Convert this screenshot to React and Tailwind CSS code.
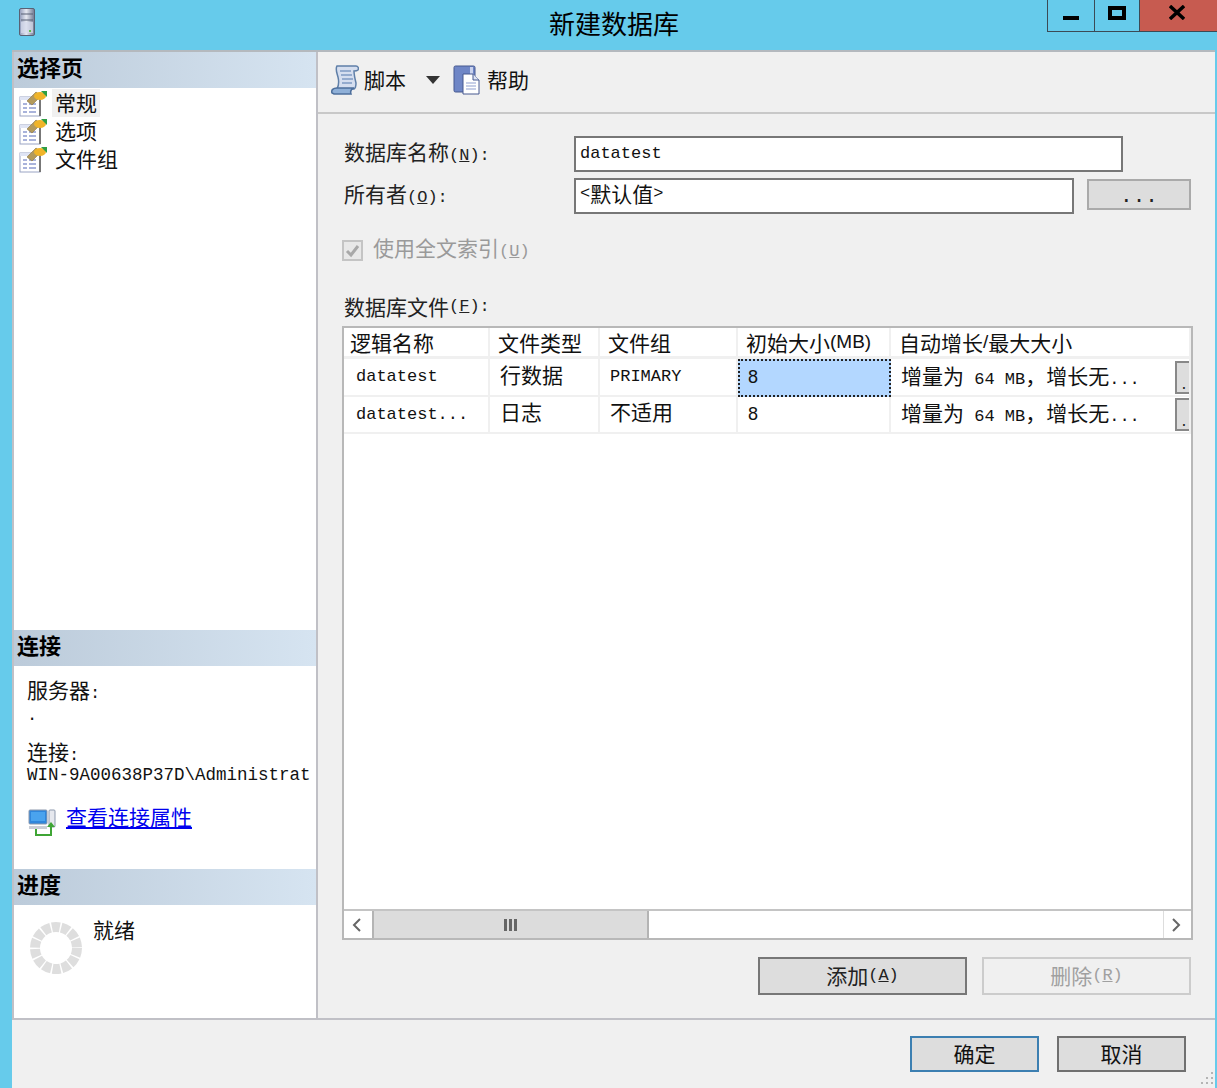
const cjk = "font-['Noto_Sans_CJK_SC','Noto_Sans_CJK_JP',sans-serif]";
const mono = "font-['Liberation_Mono','Noto_Sans_CJK_SC',monospace]";

function Mnemonic({ before, letter, after = ')' }) {
  return (
    <>
      {before}
      <span className={`${mono} text-[17px]`}>
        (<span className="underline">{letter}</span>{after}
      </span>
    </>
  );
}

function PageIcon() {
  return (
    <svg width="28" height="27" viewBox="0 0 28 27" className="shrink-0">
      <rect x="1" y="7" width="20" height="19" fill="#fff" stroke="#9aa4c4" />
      <rect x="1" y="7" width="20" height="3" fill="#dfe4f4" />
      <path d="M4 14h4M10 14h7M4 18h4M10 18h7M4 22h4M10 22h7" stroke="#8d9bd0" strokeWidth="1.5" />
      <path d="M21 8v18" stroke="#777" strokeWidth="2" />
      <path d="M8 11 17 2l5 4-9 9z" fill="#b39a5c" stroke="#8a7440" strokeWidth="0.6" />
      <ellipse cx="21" cy="6" rx="6" ry="4" fill="#f0b429" />
      <path d="M22 1h6v6z" fill="#2f9e44" />
    </svg>
  );
}

function ServerIcon() {
  return (
    <svg width="16" height="28" viewBox="0 0 16 28">
      <defs>
        <linearGradient id="srv" x1="0" x2="1" y1="0" y2="0">
          <stop offset="0" stopColor="#8f99b8" />
          <stop offset="0.45" stopColor="#e6e9f2" />
          <stop offset="1" stopColor="#6d7690" />
        </linearGradient>
      </defs>
      <rect x="0.5" y="0.5" width="15" height="27" rx="1.5" fill="url(#srv)" stroke="#596174" />
      <path d="M2 6h12M2 12h12" stroke="#596174" />
      <rect x="2" y="14" width="12" height="11" fill="#d7dced" opacity="0.7" />
      <rect x="10" y="22" width="2" height="2" fill="#5fc04a" />
    </svg>
  );
}

function ScrollIcon() {
  return (
    <svg width="28" height="30" viewBox="0 0 28 30" className="shrink-0">
      <path d="M6 1h19c2 0 3 2 2 4-1 1-3 1-4 1 0 4 1 8 2 12 0 3 0 5-2 6H6c2-4 2-8 1-12C6 8 4 4 6 1z" fill="#d5deef" stroke="#5f7fa8" strokeWidth="1.5" />
      <path d="M9 6h11M10 10h11M11 14h11M11 18h10" stroke="#7f9bc4" strokeWidth="1.5" />
      <path d="M1 28c-1-3 1-5 5-5h17c-3 1-4 3-3 6H3z" fill="#8fb0d8" stroke="#4d6f9c" strokeWidth="1.5" />
    </svg>
  );
}

function HelpIcon() {
  return (
    <svg width="28" height="30" viewBox="0 0 28 30" className="shrink-0">
      <rect x="1" y="1" width="21" height="26" rx="1.5" fill="#6f86c6" stroke="#46588f" />
      <rect x="17" y="2" width="3" height="12" fill="#c9d2ee" />
      <path d="M10 9h10l6 6v14H10z" fill="#fff" stroke="#46588f" />
      <path d="M20 9v6h6" fill="#dfe5f5" stroke="#46588f" />
      <path d="M13 18h10M13 21h10M13 24h10" stroke="#8fa0cf" strokeWidth="1.2" />
    </svg>
  );
}

function ConnectionIcon() {
  return (
    <svg width="28" height="28" viewBox="0 0 28 28" className="shrink-0">
      <rect x="1" y="1" width="18" height="14" rx="1" fill="#2f86dc" stroke="#8d99ad" />
      <rect x="3" y="3" width="14" height="9" fill="#4aa3ee" />
      <rect x="1" y="17" width="18" height="3" fill="#c9cdd6" />
      <rect x="21" y="1" width="6" height="17" rx="1" fill="#e6e8ee" stroke="#8d99ad" />
      <path d="M8 20v6h15v-9" fill="none" stroke="#3fa535" strokeWidth="2" />
      <path d="m19 18 4-5 4 5z" fill="#3fa535" />
    </svg>
  );
}

function Spinner() {
  return (
    <svg width="52" height="52" viewBox="0 0 52 52" className="shrink-0">
      <circle cx="26" cy="26" r="21" fill="none" stroke="#dedede" strokeWidth="10" strokeDasharray="8 1.42" />
    </svg>
  );
}

function SectionHeader({ children }) {
  return (
    <div className="flex h-9 items-center bg-linear-to-r from-[#bccbda] to-[#d6e4f1] pb-[8px] pl-[3px] text-[22px] font-bold text-black">
      {children}
    </div>
  );
}

function NavItem({ label, selected }) {
  return (
    <div className="flex h-[28px] items-center pl-[5px]">
      <PageIcon />
      <span className={`ml-[5px] flex h-[28px] items-center px-[3px] text-[21px] text-[#111] ${selected ? 'bg-[#f0f0f0]' : ''}`}>
        {label}
      </span>
    </div>
  );
}

function GrayButton({ className = '', children }) {
  return (
    <button type="button" className={`flex items-center justify-center bg-[#dddddd] text-[21px] ${className}`}>
      {children}
    </button>
  );
}

const CELL = 'flex items-center border-r-[2px] border-b-[2px] border-[#f0f0f0] whitespace-nowrap';
const COLS = 'grid grid-cols-[146px_110px_138px_153px_1fr]';

function GrowthCell({ textClass = '' }) {
  return (
    <div className={`${CELL} justify-between border-r-0 pl-[10px]`}>
      <span className={textClass}>
        增量为<span className={`${mono} text-[17px]`}> 64 MB</span>，增长无<span className={`${mono} text-[17px]`}>...</span>
      </span>
      <div className="flex h-[33px] w-[14px] shrink-0 items-end justify-end border-2 border-r-0 border-[#888] bg-[#dddddd] pr-[3px] text-[14px] leading-[18px]">.</div>
    </div>
  );
}

function FilesTable() {
  return (
    <div className="ml-[-2px] mt-[7px] flex h-[614px] w-[851px] flex-col border-2 border-[#b8b8b8] bg-white text-[21px] leading-[24px] text-[#111]">
      <div className={`${COLS} h-[31px]`}>
        <div className={`${CELL} border-b-[3px] pl-[6px]`}>逻辑名称</div>
        <div className={`${CELL} border-b-[3px] pl-[8px]`}>文件类型</div>
        <div className={`${CELL} border-b-[3px] pl-[8px]`}>文件组</div>
        <div className={`${CELL} border-b-[3px] pl-[8px]`}>
          初始大小<span className="font-['Liberation_Sans',sans-serif] text-[19px]">(MB)</span>
        </div>
        <div className={`${CELL} border-b-[3px] border-r-0 pl-[8px]`}>
          自动增长<span className="font-['Liberation_Sans',sans-serif] text-[19px]">/</span>最大大小
        </div>
      </div>
      <div className={`${COLS} h-[38px]`}>
        <div className={`${CELL} ${mono} pl-[12px] text-[17px]`}>datatest</div>
        <div className={`${CELL} pb-[6px] pl-[10px]`}>行数据</div>
        <div className={`${CELL} ${mono} pl-[10px] text-[17px]`}>PRIMARY</div>
        <div className="flex items-center border-2 border-dotted border-[#222] bg-[#b3d7ff] pb-[2px] pl-[8px] font-['Liberation_Sans',sans-serif] text-[18px]">8</div>
        <GrowthCell />
      </div>
      <div className={`${COLS} h-[37px]`}>
        <div className={`${CELL} ${mono} pl-[12px] text-[17px]`}>datatest...</div>
        <div className={`${CELL} pb-[8px] pl-[10px]`}>日志</div>
        <div className={`${CELL} pb-[8px] pl-[10px]`}>不适用</div>
        <div className={`${CELL} pb-[2px] pl-[10px] font-['Liberation_Sans',sans-serif] text-[18px]`}>8</div>
        <GrowthCell />
      </div>
      <div className="flex-1" />
      <div className="flex h-[29px] border-t-2 border-[#c4c4c4]">
        <div className="flex w-[28px] items-center justify-center pr-[2px]">
          <svg width="12" height="16" viewBox="0 0 12 16"><path d="M9 2 3 8l6 6" fill="none" stroke="#666" strokeWidth="2" /></svg>
        </div>
        <div className="flex w-[277px] items-center justify-center border-x-2 border-[#b4b4b4] bg-[#dcdcdc]">
          <svg width="14" height="12" viewBox="0 0 14 12"><path d="M0 0h3v12H0zM5 0h3v12H5zM10 0h3v12h-3z" fill="#666" /></svg>
        </div>
        <div className="flex-1" />
        <div className="flex w-[28px] items-center justify-center border-l border-[#dddddd] pr-[4px]">
          <svg width="12" height="16" viewBox="0 0 12 16"><path d="m3 2 6 6-6 6" fill="none" stroke="#666" strokeWidth="2" /></svg>
        </div>
      </div>
    </div>
  );
}

function WindowControls() {
  return (
    <div className="absolute right-0 top-0 flex h-[32px] border-b border-[#3b4a55]">
      <div className="flex w-[48px] items-end justify-center border-x border-[#3b4a55] pb-[11px]">
        <div className="h-[4px] w-[16px] bg-black" />
      </div>
      <div className="flex w-[44px] items-start justify-center pt-[6px]">
        <div className="h-[14px] w-[18px] border-[4px] border-black" />
      </div>
      <div className="flex w-[78px] items-start justify-center border-l border-[#3b4a55] bg-[#c75b50] pr-[3px] pt-[5px]">
        <svg width="16" height="15" viewBox="0 0 16 15"><path d="m1 1 14 13M15 1 1 14" stroke="#000" strokeWidth="3.4" /></svg>
      </div>
    </div>
  );
}

export default function App() {
  return (
    <div className={`${cjk} flex h-[1088px] w-[1217px] flex-col overflow-hidden bg-[#66cbeb] text-black`}>
      <div className="relative flex h-[50px] shrink-0 items-center justify-center pb-[6px] pl-[11px]">
        <div className="absolute left-[19px] top-[8px]"><ServerIcon /></div>
        <span className="text-[26px]">新建数据库</span>
        <WindowControls />
      </div>

      <div className="ml-[12px] mr-[2px] flex flex-1 flex-col border-t-2 border-[#b4b9be] bg-[#f0f0f0]">
        <div className="flex h-[968px] shrink-0 border-b-2 border-[#c0c0c6]">
          <aside className="flex w-[306px] shrink-0 flex-col border-x-2 border-[#c0c0c6] bg-white">
            <div className="h-[578px] shrink-0">
              <SectionHeader>选择页</SectionHeader>
              <div className="pt-[1px]">
                <NavItem label="常规" selected />
                <NavItem label="选项" />
                <NavItem label="文件组" />
              </div>
            </div>
            <div className="h-[239px] shrink-0">
              <SectionHeader>连接</SectionHeader>
              <div className="pl-[13px] pt-[8px] text-[21px] text-[#111]">
                <div className="h-[30px] leading-[30px]">服务器<span className={`${mono} text-[17px]`}>:</span></div>
                <div className={`${mono} h-[37px] text-[17px] leading-[24px]`}>.</div>
                <div className="mb-[3px] h-[21px] leading-[21px]">连接<span className={`${mono} text-[17px]`}>:</span></div>
                <div className={`${mono} h-[21px] whitespace-nowrap text-[17.5px] leading-[21px]`}>WIN-9A00638P37D\Administrat</div>
                <div className="mt-[15px] flex items-center pl-[1px]">
                  <ConnectionIcon />
                  <a className="ml-[10px] pb-[12px] text-[#0000ee] underline">查看连接属性</a>
                </div>
              </div>
            </div>
            <div className="flex-1">
              <SectionHeader>进度</SectionHeader>
              <div className="flex pl-[16px] pt-[17px]">
                <Spinner />
                <span className="ml-[11px] mt-[-8px] text-[21px] text-[#111]">就绪</span>
              </div>
            </div>
          </aside>

          <main className="flex flex-1 flex-col">
            <div className="flex h-[62px] shrink-0 items-center border-b-2 border-[#c8c8c8] pb-[5px] pl-[13px] text-[21px] text-[#111]">
              <ScrollIcon />
              <span className="ml-[5px]">脚本</span>
              <svg width="14" height="8" viewBox="0 0 14 8" className="ml-[20px]"><path d="M0 0h14L7 8z" fill="#333" /></svg>
              <span className="ml-[13px]"><HelpIcon /></span>
              <span className="ml-[6px]">帮助</span>
            </div>

            <div className="flex flex-1 flex-col pl-[26px] text-[21px] text-[#222]">
              <div className="mt-[22px] flex h-[36px] items-center">
                <span className="w-[230px] pb-[4px]"><Mnemonic before="数据库名称" letter="N" after="):" /></span>
                <div className={`${mono} flex h-full w-[549px] items-center border-2 border-[#777] bg-white pl-[4px] text-[17px] text-[#111]`}>datatest</div>
              </div>
              <div className="mt-[6px] flex h-[36px] items-center">
                <span className="w-[230px] pb-[4px]"><Mnemonic before="所有者" letter="O" after="):" /></span>
                <div className="flex h-full w-[500px] items-center border-2 border-[#777] bg-white pb-[4px] pl-[4px] text-[#111]">
                  <span className={`${mono} text-[17px]`}>&lt;</span>默认值<span className={`${mono} text-[17px]`}>&gt;</span>
                </div>
                <GrayButton className={`${mono} ml-[13px] mt-[-3px] h-[31px] w-[104px] border-2 border-[#aaa] pt-[4px] text-[17px]`}>...</GrayButton>
              </div>

              <div className="ml-[-2px] mt-[26px] flex h-[21px] items-center text-[#9a9a9a]">
                <div className="flex h-[21px] w-[21px] items-center justify-center border-2 border-[#c4c4c4] bg-[#e8e8e8]">
                  <svg width="15" height="14" viewBox="0 0 15 14"><path d="m2 7 4 4 7-9" fill="none" stroke="#a8a8a8" strokeWidth="3" /></svg>
                </div>
                <span className="ml-[10px] pb-[4px]"><Mnemonic before="使用全文索引" letter="U" /></span>
              </div>

              <div className="mt-[34px] flex h-[24px] items-center">
                <Mnemonic before="数据库文件" letter="F" after="):" />
              </div>

              <FilesTable />

              <div className="ml-[414px] mt-[17px] flex gap-[15px]">
                <GrayButton className="h-[38px] w-[209px] border-2 border-[#777] text-[#222]">
                  <Mnemonic before="添加" letter="A" />
                </GrayButton>
                <GrayButton className="h-[38px] w-[209px] border-2 border-[#ccc] bg-[#f0f0f0] text-[#a0a0a0]">
                  <Mnemonic before="删除" letter="R" />
                </GrayButton>
              </div>
            </div>
          </main>
        </div>

        <div className="relative flex flex-1 items-start justify-end gap-[18px] pr-[29px] pt-[16px]">
          <GrayButton className="h-[36px] w-[129px] border-2 border-[#3c7fb1] text-[#111]">确定</GrayButton>
          <GrayButton className="h-[36px] w-[129px] border-2 border-[#707070] text-[#111]">取消</GrayButton>
          <svg width="14" height="16" viewBox="0 0 14 16" className="absolute bottom-[1px] right-0">
            <path d="M10 1h2v2h-2zM5 6h2v2H5zM10 6h2v2h-2zM0 11h2v2H0zM5 11h2v2H5zM10 11h2v2h-2z" fill="#b4b4b4" />
          </svg>
        </div>
      </div>
    </div>
  );
}
